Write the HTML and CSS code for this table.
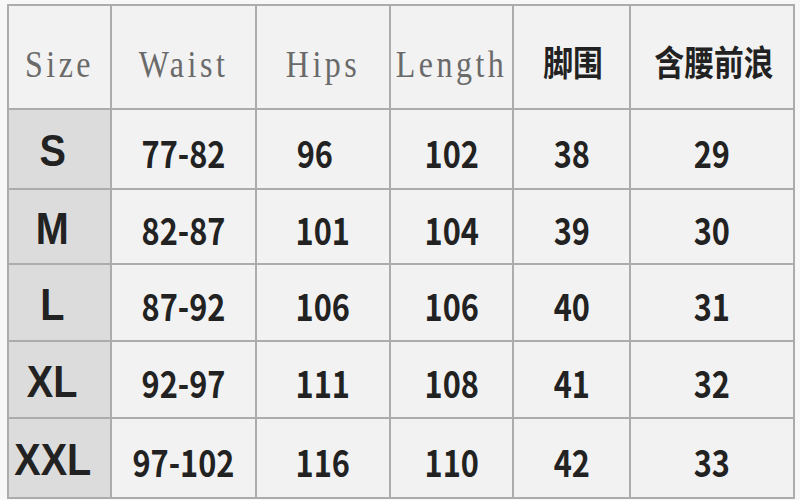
FILE: index.html
```html
<!DOCTYPE html>
<html lang="zh">
<head>
<meta charset="utf-8">
<title>Size chart</title>
<link rel="stylesheet" href="styles.css">
</head>
<body>
<div class="chart">
  <div class="cell head"><span class="en">Size</span></div>
  <div class="cell head"><span class="en">Waist</span></div>
  <div class="cell head"><span class="en">Hips</span></div>
  <div class="cell head"><span class="en">Length</span></div>
  <div class="cell head"><span class="zh">脚围</span></div>
  <div class="cell head"><span class="zh">含腰前浪</span></div>

  <div class="cell size"><span class="sz">S</span></div>
  <div class="cell"><span class="num">77-82</span></div>
  <div class="cell shifted"><span class="num">96</span></div>
  <div class="cell"><span class="num">102</span></div>
  <div class="cell"><span class="num">38</span></div>
  <div class="cell"><span class="num">29</span></div>

  <div class="cell size"><span class="sz">M</span></div>
  <div class="cell"><span class="num">82-87</span></div>
  <div class="cell"><span class="num">101</span></div>
  <div class="cell"><span class="num">104</span></div>
  <div class="cell"><span class="num">39</span></div>
  <div class="cell"><span class="num">30</span></div>

  <div class="cell size"><span class="sz">L</span></div>
  <div class="cell"><span class="num">87-92</span></div>
  <div class="cell"><span class="num">106</span></div>
  <div class="cell"><span class="num">106</span></div>
  <div class="cell"><span class="num">40</span></div>
  <div class="cell"><span class="num">31</span></div>

  <div class="cell size"><span class="sz">XL</span></div>
  <div class="cell"><span class="num">92-97</span></div>
  <div class="cell"><span class="num">111</span></div>
  <div class="cell"><span class="num">108</span></div>
  <div class="cell"><span class="num">41</span></div>
  <div class="cell"><span class="num">32</span></div>

  <div class="cell size"><span class="sz">XXL</span></div>
  <div class="cell"><span class="num">97-102</span></div>
  <div class="cell"><span class="num">116</span></div>
  <div class="cell"><span class="num">110</span></div>
  <div class="cell"><span class="num">42</span></div>
  <div class="cell"><span class="num">33</span></div>
</div>
</body>
</html>
```

FILE: styles.css
```css
html, body {
  margin: 0;
  padding: 0;
  background: #f7f7f7;
}

body {
  width: 800px;
  height: 500px;
  overflow: hidden;
}

.chart {
  margin: 4px 0 0 7px;
  width: 788px;
  display: grid;
  grid-template-columns: 101px 143px 132px 121px 115px 162px;
  grid-template-rows: 102px 78px 73px 75px 75px 78px;
  gap: 2px;
  padding: 2px;
  box-sizing: border-box;
  background: #acacac;
}

.cell {
  background: #f2f2f2;
  display: flex;
  align-items: center;
  justify-content: center;
  overflow: visible;
  white-space: nowrap;
}

.cell.size {
  background: #dcdcdc;
  padding-right: 14px;
}

.cell.shifted {
  padding-right: 16px;
}

.en {
  display: inline-block;
  font-family: "Liberation Serif", serif;
  font-size: 32px;
  line-height: 1;
  letter-spacing: 3.5px;
  color: #6a6a6a;
  transform: scaleY(1.2);
  padding-top: 12px;
}

.zh {
  display: inline-block;
  font-family: "Noto Sans CJK SC", sans-serif;
  font-weight: 700;
  font-size: 35px;
  line-height: 1;
  color: #222222;
  transform: scaleX(0.85);
  padding-top: 6px;
  margin-left: 4px;
}

.num {
  display: inline-block;
  font-family: "Noto Sans CJK SC", sans-serif;
  font-weight: 700;
  font-size: 37px;
  line-height: 1;
  color: #222222;
  transform: scaleX(0.83);
  padding-top: 6px;
}

.sz {
  display: inline-block;
  font-family: "Liberation Sans", Arial, sans-serif;
  font-weight: 700;
  font-size: 44px;
  line-height: 1;
  color: #222222;
  transform: scaleX(0.9);
  padding-top: 4px;
}
```
